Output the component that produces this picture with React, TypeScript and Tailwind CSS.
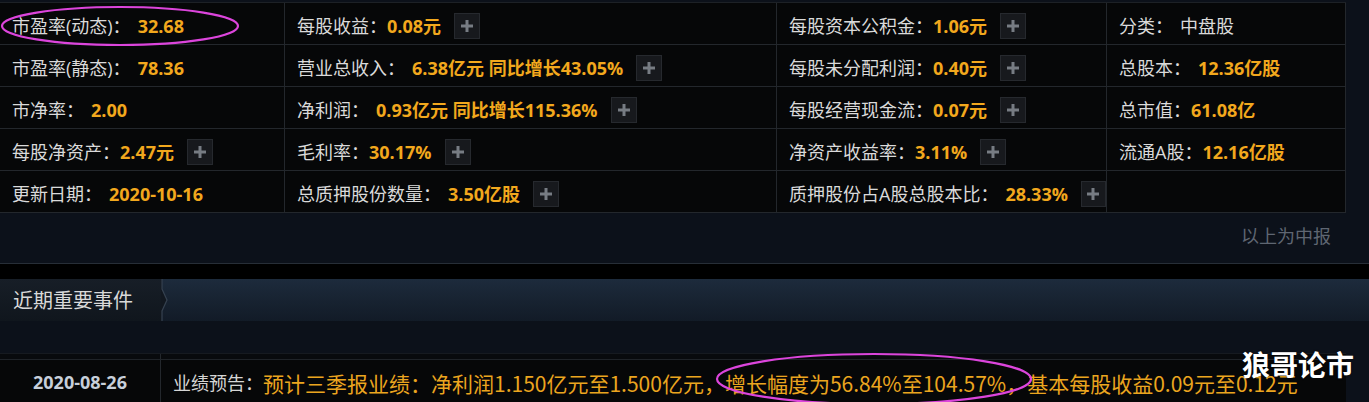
import React from 'react'

interface Cell {
  label: string
  value?: string
  gap?: boolean
  plus?: boolean
  plain?: boolean
}

const rows: Cell[][] = [
  [
    { label: '市盈率(动态)：', value: '32.68', gap: true },
    { label: '每股收益：', value: '0.08元', plus: true },
    { label: '每股资本公积金：', value: '1.06元', plus: true },
    { label: '分类：', value: '中盘股', gap: true, plain: true },
  ],
  [
    { label: '市盈率(静态)：', value: '78.36', gap: true },
    { label: '营业总收入：', value: '6.38亿元 同比增长43.05%', gap: true, plus: true },
    { label: '每股未分配利润：', value: '0.40元', plus: true },
    { label: '总股本：', value: '12.36亿股', gap: true },
  ],
  [
    { label: '市净率：', value: '2.00', gap: true },
    { label: '净利润：', value: '0.93亿元 同比增长115.36%', gap: true, plus: true },
    { label: '每股经营现金流：', value: '0.07元', plus: true },
    { label: '总市值：', value: '61.08亿' },
  ],
  [
    { label: '每股净资产：', value: '2.47元', plus: true },
    { label: '毛利率：', value: '30.17%', plus: true },
    { label: '净资产收益率：', value: '3.11%', plus: true },
    { label: '流通A股：', value: '12.16亿股' },
  ],
  [
    { label: '更新日期：', value: '2020-10-16', gap: true },
    { label: '总质押股份数量：', value: '3.50亿股', gap: true, plus: true },
    { label: '质押股份占A股总股本比：', value: '28.33%', gap: true, plus: true },
    { label: '' },
  ],
]

const font = { fontFamily: '"Open Sans", "Noto Sans CJK SC", sans-serif' }

function PlusButton() {
  return (
    <span className="ml-[13px] w-[26px] h-[26px] flex items-center justify-center bg-[#17191d] border border-[#26292e]">
      <svg width="12" height="12" viewBox="0 0 12 12">
        <rect x="4.5" y="0" width="3" height="12" fill="#777c83" />
        <rect x="0" y="4.5" width="12" height="3" fill="#777c83" />
      </svg>
    </span>
  )
}

export default function App() {
  return (
    <div className="w-[1369px] h-[402px] bg-[#0c111a] relative overflow-hidden text-[18px] leading-none" style={font}>
      <div className="h-[2px]" />

      {/* indicator table */}
      <div className="w-[1346px] grid grid-cols-[285px_492px_330px_239px] border-t border-[#1d2126]">
        {rows.map((row, ri) =>
          row.map((cell, ci) => (
            <div
              key={`${ri}-${ci}`}
              className="h-[42px] pt-[5px] pl-3 flex items-center bg-[#060708] border-r border-b border-[#23272c] whitespace-nowrap"
            >
              <span className="text-[#dadada]">{cell.label}</span>
              {cell.value && (
                <span
                  className={`${cell.gap ? 'ml-[7px]' : ''} ${cell.plain ? 'text-[#dadada]' : 'text-[#f2a81d] font-bold'}`}
                >
                  {cell.value}
                </span>
              )}
              {cell.plus && <PlusButton />}
            </div>
          ))
        )}
      </div>

      <div className="h-[51px] border-b border-[#272e37] flex items-center">
        <div className="w-[1346px] pr-[15px] text-right text-[#5f6672] pb-[4px]">以上为中报</div>
      </div>
      <div className="h-[15px] bg-black" />

      {/* section header */}
      <div className="h-[42px] flex bg-gradient-to-b from-[#1d2b3c] to-[#121b27]">
        <div className="w-[161px] h-full flex items-center pl-[13px] pt-[2px] bg-gradient-to-b from-[#171e27] to-[#10161d] text-[20px] text-[#d9d9d9]">
          近期重要事件
        </div>
        <svg width="10" height="42" viewBox="0 0 10 42">
          <path d="M0 0 H1 V10 L6 21 L1 32 V42 H0 Z" fill="#121820" />
          <path d="M1 0 V10 L6 21 L1 32 V42" stroke="#364250" strokeWidth="1.2" fill="none" />
        </svg>
      </div>

      <div className="h-[32px]" />

      {/* events table */}
      <div className="w-[1346px] border-t border-[#161a20]">
        <div className="h-[6px] flex bg-[#080a0d] border-b border-[#1f2328]">
          <div className="w-[161px] border-r border-[#23272c]" />
        </div>
        <div className="h-[44px] flex bg-[#060708] whitespace-nowrap">
          <div className="w-[161px] shrink-0 flex items-center justify-center border-r border-[#23272c] font-bold text-[#c7cfda]">
            2020-08-26
          </div>
          <div className="pl-3 pt-[2px] flex items-center overflow-hidden">
            <span className="text-[#d5d5d5]">业绩预告：</span>
            <span
              className="text-[21px] text-[#eba51f]"
              style={{ fontFamily: '"Noto Sans CJK SC", sans-serif' }}
            >
              预计三季报业绩：净利润1.150亿元至1.500亿元，增长幅度为56.84%至104.57%，基本每股收益0.09元至0.12元
            </span>
          </div>
        </div>
      </div>

      {/* annotations drawn over the screenshot */}
      <svg className="absolute left-0 top-0 pointer-events-none" width="1369" height="402">
        <ellipse cx="120" cy="26" rx="118" ry="19" fill="none" stroke="#dc45dc" strokeWidth="2.2" />
        <ellipse cx="874" cy="379" rx="157" ry="25" fill="none" stroke="#dc45dc" strokeWidth="2.2" />
      </svg>
      <div
        className="absolute left-[1242px] top-[350px] text-[28px] font-bold text-white"
        style={{ fontFamily: '"Noto Sans CJK SC", sans-serif', textShadow: '0 0 2px rgba(0,0,0,0.6)' }}
      >
        狼哥论市
      </div>
    </div>
  )
}
